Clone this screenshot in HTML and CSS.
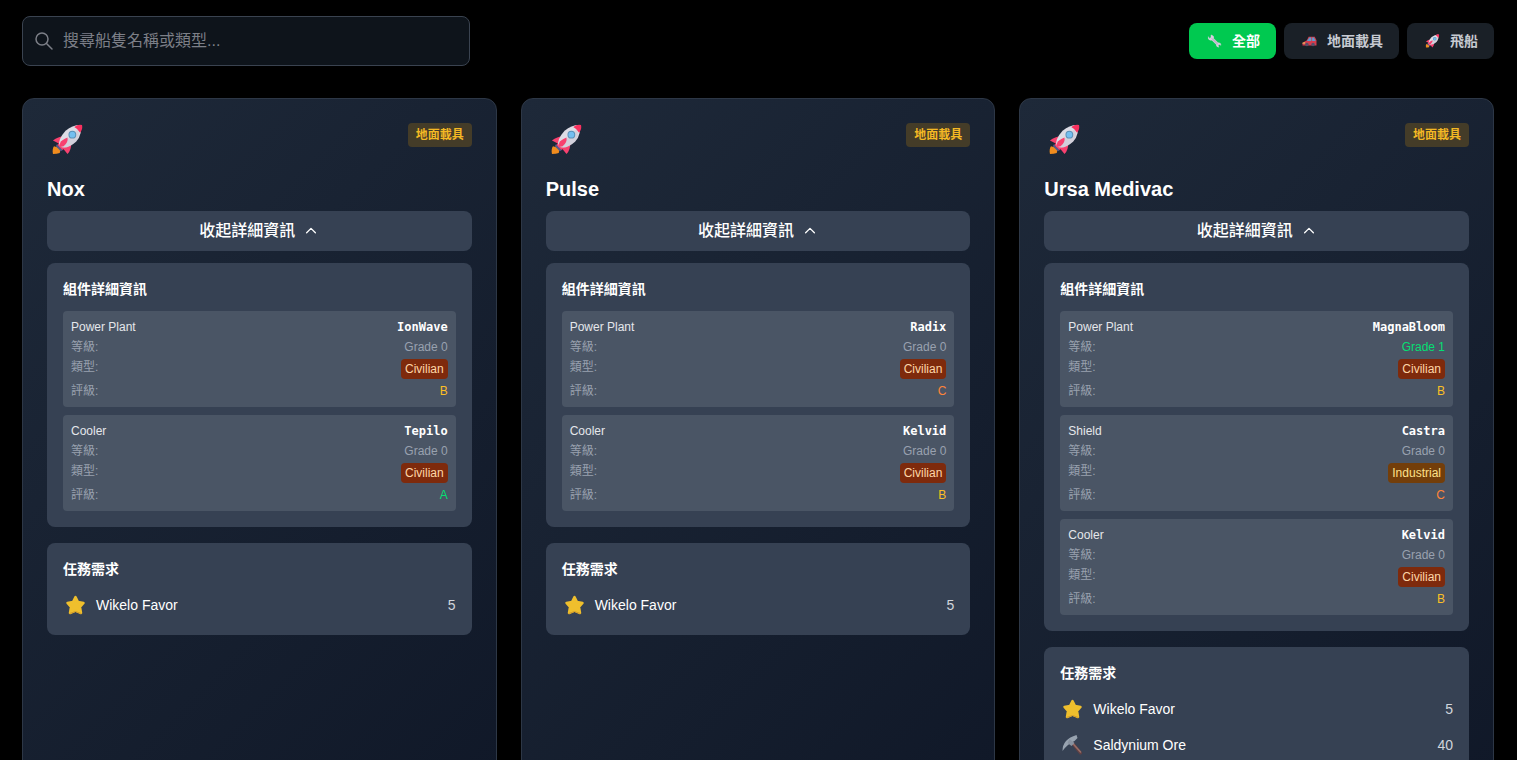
FILE: index.html
```html
<!DOCTYPE html>
<html lang="zh-Hant">
<head>
    <meta charset="UTF-8" />
    <meta name="viewport" content="width=device-width, initial-scale=1.0" />
    <title>船隻列表</title>
    <link rel="stylesheet" href="styles.css">
</head>
<body>
<!-- shared icons -->
<svg class="sprite" aria-hidden="true">
    <symbol id="icon-rocket" viewBox="0 0 32 32">
        <path d="M2 23 L9 25 L8 30 Q5 31 1 31 Q0 26 2 23Z" fill="#f08c1e"/>
        <path d="M13 12 Q6 13 1 17 L7 20 L5 22 L10 27 L12 26 L16 31 Q20 27 20 19Z" fill="#f8416f"/>
        <path d="M5 21 L11 27 L9 28 L4 23Z" fill="#55598a"/>
        <path d="M8 23 Q5 17 14 7 Q21 1 29 1 Q32 10 25 18 Q15 27 8 23Z" fill="#dddce5"/>
        <path d="M8 23 L26 6 Q30 10 25 18 Q15 27 8 23Z" fill="#c2bfce" opacity=".4"/>
        <path d="M23 3 Q27 0 31 1 Q32 5 29 9 Q27 5 23 3Z" fill="#f8315f"/>
        <path d="M7 24 L9 18 Q13 15 16 14 Q17 19 12 23Z" fill="#f8416f"/>
        <circle cx="21" cy="11" r="4" fill="#5a91b8"/>
        <circle cx="21" cy="11" r="3" fill="#74bff0"/>
    </symbol>
    <symbol id="icon-wrench" viewBox="0 0 16 16">
        <path d="M4 1 L4 4 L2 5 L1 3 Q0 6 3 7 L5 7 L10 12 Q10 15 13 15 L12 13 L14 12 L15 13 Q16 10 12 10 L7 5 Q8 2 4 1Z" fill="#d8cee0" stroke="#d8cee0" stroke-width=".5"/>
        <path d="M5 5 L12 12" stroke="#a896b5" stroke-width="1"/>
    </symbol>
    <symbol id="icon-car" viewBox="0 0 16 16">
        <path d="M0 10 L5 7 L7 3 L14 3 L16 7 L16 13 L0 13Z" fill="#d43c4e"/>
        <path d="M5 8 L8 4 L10 4 L10 8Z M11 4 L13 4 L15 8 L11 8Z" fill="#5f9dce"/>
        <circle cx="5" cy="12" r="2" fill="#55506a"/>
        <circle cx="12" cy="12" r="2" fill="#55506a"/>
        <path d="M0 10 L3 9 L3 11 L0 11Z" fill="#e6b15e"/>
    </symbol>
    <symbol id="icon-star" viewBox="0 0 20 20">
        <path d="M10 2 L12.500 7 L18 8 L14.500 12 L15.500 18 L10 15.500 L4.500 18 L5.500 12 L2 8 L7.500 7Z" fill="#efbf2d" stroke="#efbf2d" stroke-width="2.500" stroke-linejoin="round"/>
        <path d="M4 18.500 L10 16.500 L16 18.500" fill="none" stroke="#d39c2a" stroke-width="1"/>
    </symbol>
    <symbol id="icon-pick" viewBox="0 0 20 20">
        <path d="M9 7 L18 18" stroke="#604044" stroke-width="3" stroke-linecap="round"/>
        <path d="M9 7 L18 17" stroke="#986e67" stroke-width="1.500" stroke-linecap="round"/>
        <path d="M0 16 Q0 4 14 0 L15 3 L12 6 Q5 9 0 16Z" fill="#98a3b0"/>
        <path d="M7 4 L12 8 L9 11 L5 8Z" fill="#8993a0"/>
    </symbol>
    <symbol id="icon-up" viewBox="0 0 16 16">
        <path d="M3 10 L8 5 L13 10" fill="none" stroke="currentColor" stroke-width="1.500" stroke-linecap="round" stroke-linejoin="round"/>
    </symbol>
</svg>

<div class="container">
    <header class="toolbar">
        <div class="search">
            <svg class="search-icon" viewBox="0 0 20 20" aria-hidden="true">
                <circle cx="8" cy="7" r="6" fill="none" stroke="currentColor" stroke-width="1.500"/>
                <path d="M12.500 11.500 L18 17" stroke="currentColor" stroke-width="1.500" stroke-linecap="round"/>
            </svg>
            <input type="text" placeholder="搜尋船隻名稱或類型..." aria-label="搜尋船隻名稱或類型">
        </div>
        <div class="filters">
            <button class="filter active"><svg><use href="#icon-wrench"/></svg>全部</button>
            <button class="filter"><svg><use href="#icon-car"/></svg>地面載具</button>
            <button class="filter"><svg><use href="#icon-rocket"/></svg>飛船</button>
        </div>
    </header>

    <main class="ship-grid">
        <article class="card">
            <div class="card-top">
                <svg class="ship-icon"><use href="#icon-rocket"/></svg>
                <span class="type-tag">地面載具</span>
            </div>
            <h3>Nox</h3>
            <button class="toggle">收起詳細資訊<svg><use href="#icon-up"/></svg></button>
            <section class="panel">
                <h4>組件詳細資訊</h4>
                <div class="components">
                    <div class="component">
                        <div class="row head"><span>Power Plant</span><span class="model">IonWave</span></div>
                        <div class="row"><span>等級:</span><span>Grade 0</span></div>
                        <div class="row"><span>類型:</span><span class="chip civilian">Civilian</span></div>
                        <div class="row"><span>評級:</span><span class="rate-b">B</span></div>
                    </div>
                    <div class="component">
                        <div class="row head"><span>Cooler</span><span class="model">Tepilo</span></div>
                        <div class="row"><span>等級:</span><span>Grade 0</span></div>
                        <div class="row"><span>類型:</span><span class="chip civilian">Civilian</span></div>
                        <div class="row"><span>評級:</span><span class="rate-a">A</span></div>
                    </div>
                </div>
            </section>
            <section class="panel">
                <h4>任務需求</h4>
                <ul class="needs">
                    <li><svg><use href="#icon-star"/></svg>Wikelo Favor<span class="count">5</span></li>
                </ul>
            </section>
        </article>

        <article class="card">
            <div class="card-top">
                <svg class="ship-icon"><use href="#icon-rocket"/></svg>
                <span class="type-tag">地面載具</span>
            </div>
            <h3>Pulse</h3>
            <button class="toggle">收起詳細資訊<svg><use href="#icon-up"/></svg></button>
            <section class="panel">
                <h4>組件詳細資訊</h4>
                <div class="components">
                    <div class="component">
                        <div class="row head"><span>Power Plant</span><span class="model">Radix</span></div>
                        <div class="row"><span>等級:</span><span>Grade 0</span></div>
                        <div class="row"><span>類型:</span><span class="chip civilian">Civilian</span></div>
                        <div class="row"><span>評級:</span><span class="rate-c">C</span></div>
                    </div>
                    <div class="component">
                        <div class="row head"><span>Cooler</span><span class="model">Kelvid</span></div>
                        <div class="row"><span>等級:</span><span>Grade 0</span></div>
                        <div class="row"><span>類型:</span><span class="chip civilian">Civilian</span></div>
                        <div class="row"><span>評級:</span><span class="rate-b">B</span></div>
                    </div>
                </div>
            </section>
            <section class="panel">
                <h4>任務需求</h4>
                <ul class="needs">
                    <li><svg><use href="#icon-star"/></svg>Wikelo Favor<span class="count">5</span></li>
                </ul>
            </section>
        </article>

        <article class="card">
            <div class="card-top">
                <svg class="ship-icon"><use href="#icon-rocket"/></svg>
                <span class="type-tag">地面載具</span>
            </div>
            <h3>Ursa Medivac</h3>
            <button class="toggle">收起詳細資訊<svg><use href="#icon-up"/></svg></button>
            <section class="panel">
                <h4>組件詳細資訊</h4>
                <div class="components">
                    <div class="component">
                        <div class="row head"><span>Power Plant</span><span class="model">MagnaBloom</span></div>
                        <div class="row"><span>等級:</span><span class="grade-1">Grade 1</span></div>
                        <div class="row"><span>類型:</span><span class="chip civilian">Civilian</span></div>
                        <div class="row"><span>評級:</span><span class="rate-b">B</span></div>
                    </div>
                    <div class="component">
                        <div class="row head"><span>Shield</span><span class="model">Castra</span></div>
                        <div class="row"><span>等級:</span><span>Grade 0</span></div>
                        <div class="row"><span>類型:</span><span class="chip industrial">Industrial</span></div>
                        <div class="row"><span>評級:</span><span class="rate-c">C</span></div>
                    </div>
                    <div class="component">
                        <div class="row head"><span>Cooler</span><span class="model">Kelvid</span></div>
                        <div class="row"><span>等級:</span><span>Grade 0</span></div>
                        <div class="row"><span>類型:</span><span class="chip civilian">Civilian</span></div>
                        <div class="row"><span>評級:</span><span class="rate-b">B</span></div>
                    </div>
                </div>
            </section>
            <section class="panel">
                <h4>任務需求</h4>
                <ul class="needs">
                    <li><svg><use href="#icon-star"/></svg>Wikelo Favor<span class="count">5</span></li>
                    <li><svg><use href="#icon-pick"/></svg>Saldynium Ore<span class="count">40</span></li>
                </ul>
            </section>
        </article>
    </main>
</div>
</body>
</html>
```
FILE: styles.css
```css
* {
  box-sizing: border-box;
}

body {
  margin: 0;
  font-family: "Liberation Sans", "Noto Sans CJK TC", sans-serif;
  font-size: 16px;
  line-height: 24px;
  background-color: #000;
  color: #fff;
}

button,
input {
  font: inherit;
}

button {
  border: none;
  cursor: pointer;
}

h3,
h4 {
  margin: 0;
  font-weight: bold;
}

.sprite {
  display: none;
}

.container {
  padding: 16px 23px 32px 22px;
}

/* Search + filters */
.toolbar {
  display: flex;
  justify-content: space-between;
  align-items: center;
  flex-wrap: wrap;
  gap: 16px;
  margin-bottom: 32px;
}

.search {
  position: relative;
  width: 448px;
  max-width: 100%;
}

.search input {
  display: block;
  width: 100%;
  height: 50px;
  padding: 12px 16px 12px 40px;
  background-color: #0e141b;
  border: 1px solid #3a4350;
  border-radius: 8px;
  color: #fff;
}

.search input::placeholder {
  color: #7c7f87;
}

.search-icon {
  position: absolute;
  top: 16px;
  left: 12px;
  width: 20px;
  height: 20px;
  color: #7c7f87;
}

.filters {
  display: flex;
  gap: 8px;
}

.filter {
  display: flex;
  align-items: center;
  gap: 8px;
  padding: 8px 16px;
  font-size: 14px;
  line-height: 20px;
  font-weight: bold;
  border-radius: 8px;
  background-color: #1a2027;
  color: #c6cad1;
}

.filter svg {
  width: 19px;
  height: 14px;
}

.filter.active {
  background-color: #00c950;
  color: #fff;
}

/* Cards */
.ship-grid {
  display: grid;
  grid-template-columns: repeat(3, 1fr);
  gap: 24px;
}

.card {
  padding: 24px;
  background: linear-gradient(135deg, #1e2939, #101828);
  border: 1px solid #2d3746;
  border-radius: 12px;
}

.card-top {
  display: flex;
  justify-content: space-between;
  align-items: flex-start;
  margin-bottom: 16px;
}

.ship-icon {
  width: 41px;
  height: 36px;
  padding: 1px 0 4px;
}

.type-tag {
  padding: 4px 8px;
  font-size: 12px;
  line-height: 16px;
  font-weight: bold;
  border-radius: 4px;
  background-color: #443c28;
  color: #f5b924;
}

.card h3 {
  margin-bottom: 8px;
  font-size: 20px;
  line-height: 28px;
}

.toggle {
  display: flex;
  justify-content: center;
  align-items: center;
  gap: 8px;
  width: 100%;
  padding: 8px 16px;
  margin-bottom: 12px;
  font-weight: 500;
  border-radius: 8px;
  background-color: #364153;
  color: #fff;
}

.toggle svg {
  width: 16px;
  height: 14px;
}

.panel {
  padding: 16px;
  border-radius: 8px;
  background-color: #364153;
}

.panel + .panel {
  margin-top: 16px;
}

.panel h4 {
  margin-bottom: 12px;
  font-size: 14px;
  line-height: 20px;
}

.components {
  display: grid;
  gap: 8px;
}

.component {
  display: grid;
  gap: 4px;
  padding: 8px;
  border-radius: 4px;
  background-color: #4a5565;
  font-size: 12px;
  line-height: 16px;
}

.row {
  display: flex;
  justify-content: space-between;
  align-items: flex-start;
  color: #99a1af;
}

.row.head {
  color: #e5e7eb;
}

.model {
  font-family: "DejaVu Sans Mono", monospace;
  font-weight: bold;
  color: #fff;
}

.chip {
  padding: 2px 4px;
  border-radius: 4px;
}

.civilian {
  background-color: #7e2a0c;
  color: #ffd6a7;
}

.industrial {
  background-color: #733e0a;
  color: #ffe08a;
}

.grade-1,
.rate-a {
  color: #05df72;
}

.rate-b {
  color: #fbbf24;
}

.rate-c {
  color: #ff8438;
}

.needs {
  display: grid;
  gap: 8px;
  margin: 0;
  padding: 0;
  list-style: none;
  font-size: 14px;
  line-height: 28px;
}

.needs li {
  display: flex;
  align-items: center;
  gap: 8px;
}

.needs svg {
  width: 25px;
  height: 20px;
}

.count {
  margin-left: auto;
  color: #d1d5dc;
}

@media (max-width: 1024px) {
  .ship-grid {
    grid-template-columns: 1fr;
  }
}
```
